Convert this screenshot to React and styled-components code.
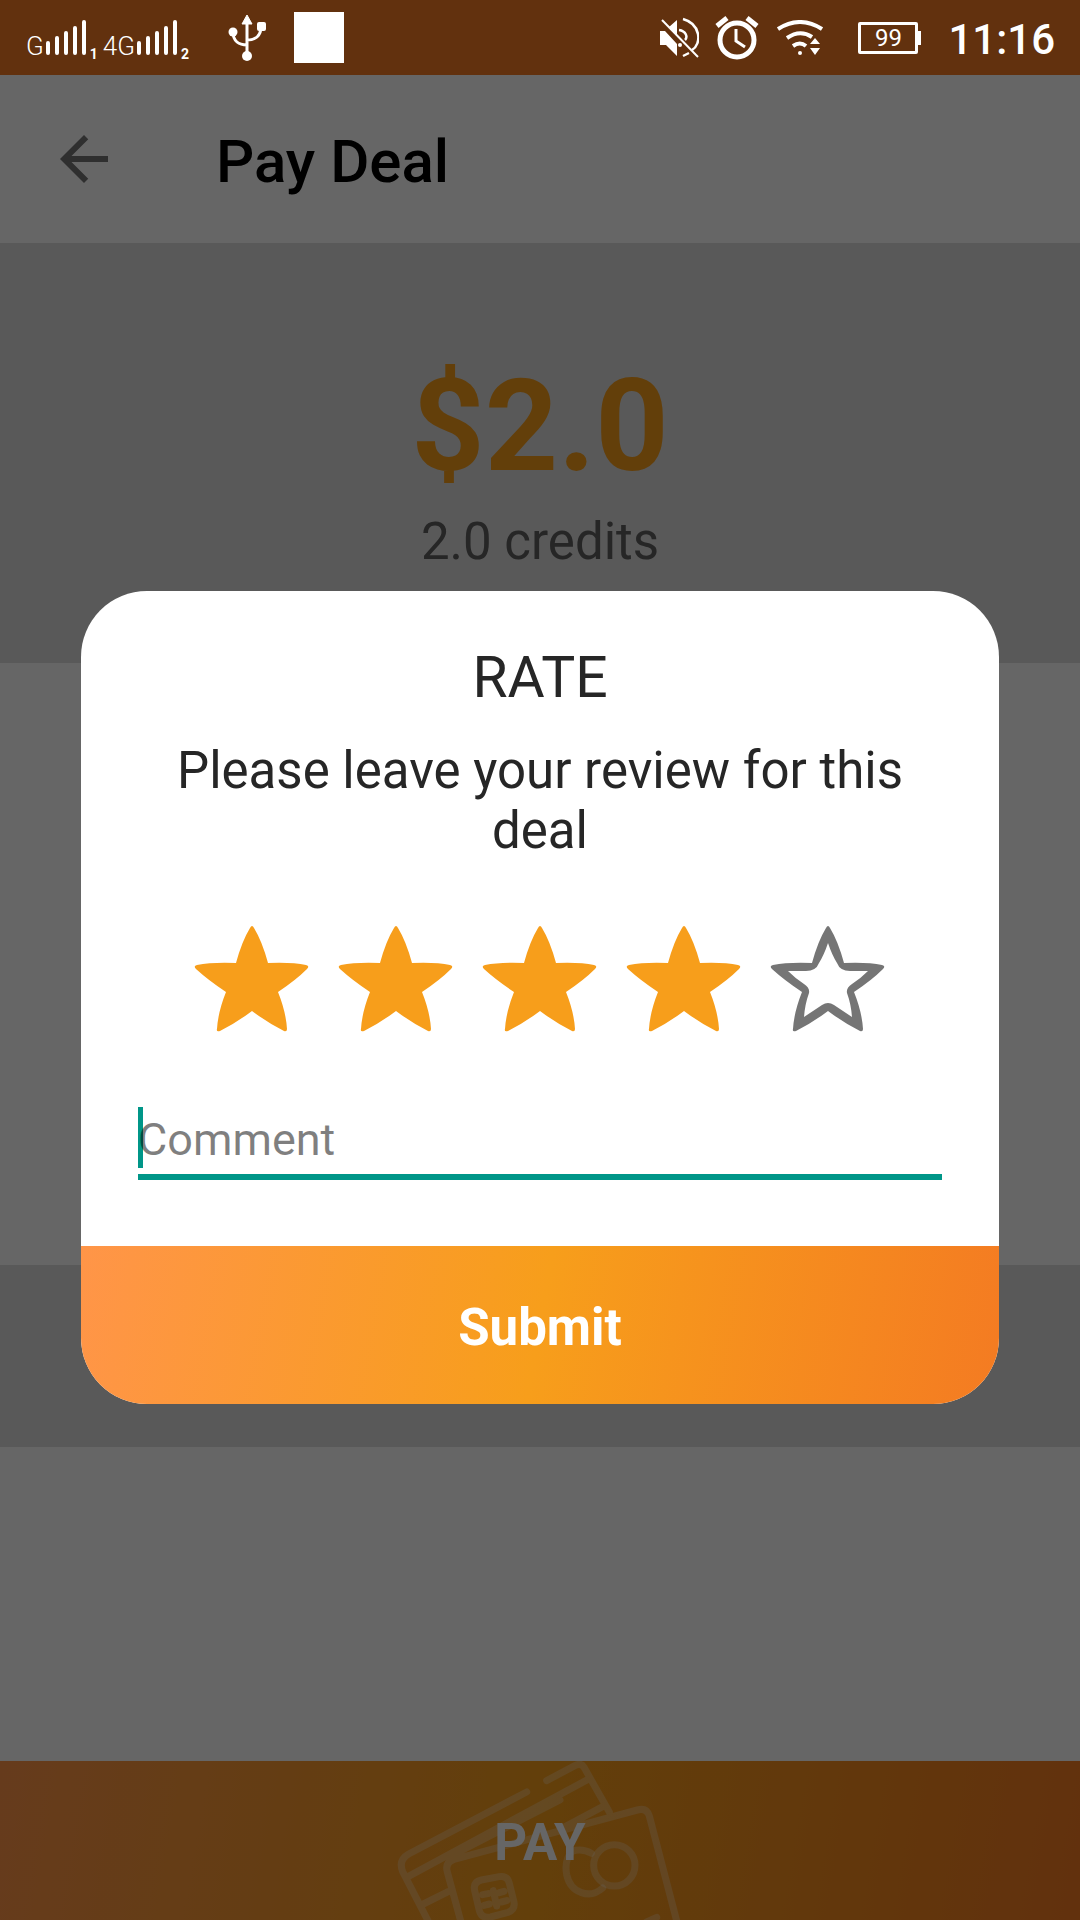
import React, { useState } from 'react';
import styled, { createGlobalStyle } from 'styled-components';

const STAR = "M58 6Q60 2 62 6Q70 19 76 41Q100 40 114 43Q118 44 115 47Q104 58 86 70Q94 90 95 107Q95 110 92 109Q76 101 60 89Q44 101 28 109Q24 110 25 107Q26 90 34 70Q16 58 4 47Q1 44 5 43Q20 40 44 41Q50 19 58 6Z";
const STAR_HOLE = "M60 21Q56 33 51 41Q48 49 38 49L20 49Q28 57 36 62Q42 66 41 71Q37 82 36 95Q45 89 54 83Q60 79 66 83Q75 89 84 95Q83 82 79 71Q78 66 84 62Q92 57 100 49L82 49Q72 49 69 41Q64 33 60 21Z";

const ratings = [1, 2, 3, 4, 5];

function SignalBars() {
    return (
        <svg width="42" height="36" viewBox="0 0 42 36" stroke="#fff" strokeWidth="4" strokeLinecap="round" aria-hidden="true">
            <path d="M2 23V33M11 18V33M20 13V33M29 8V33M38 2V33" />
        </svg>
    );
}

function UsbIcon() {
    return (
        <svg width="38" height="48" viewBox="0 0 38 48" fill="none" stroke="#fff" strokeWidth="3" aria-hidden="true">
            <path d="M19 8V41M5 18C5 27 11 31 19 31M33 13C33 22 27 26 19 26" />
            <path d="M19 1L24 10H14Z" fill="#fff" strokeWidth="1" strokeLinejoin="round" />
            <circle cx="5" cy="18" r="4.5" fill="#fff" stroke="none" />
            <rect x="29" y="8" width="9" height="9" rx="2" fill="#fff" stroke="none" />
            <circle cx="19" cy="42" r="5" fill="#fff" stroke="none" />
        </svg>
    );
}

function MuteIcon() {
    return (
        <svg width="40" height="42" viewBox="0 0 40 42" fill="none" stroke="#fff" strokeWidth="2" aria-hidden="true">
            <path d="M1 14H6L18 27V39L7 28H1ZM10 10L18 3V18Z" fill="#fff" stroke="none" />
            <path d="M24 2C42 7 43 27 33 33M30 36L24 39M20 13C27 14 29 20 26 23" strokeWidth="2.5" />
            <path d="M3 3L39 40" />
            <circle cx="21" cy="28" r="2" fill="#fff" stroke="none" />
        </svg>
    );
}

function AlarmIcon() {
    return (
        <svg width="46" height="44" viewBox="0 0 46 44" fill="none" stroke="#fff" aria-hidden="true">
            <circle cx="22" cy="24" r="17" strokeWidth="5" />
            <path d="M21 13V25L30 31" strokeWidth="3" />
            <path d="M2 10L12 2M32 2L42 10" strokeWidth="5" />
        </svg>
    );
}

function WifiIcon() {
    return (
        <svg width="46" height="36" viewBox="0 0 46 36" fill="none" stroke="#fff" strokeWidth="4" aria-hidden="true">
            <path d="M1 9Q23 -5 45 9M10 18Q23 9 35 17M16 26Q23 21 29 26" />
            <circle cx="23" cy="33" r="2" fill="#fff" stroke="none" />
            <path d="M33 24L38 18L43 24ZM33 28H43L38 35Z" fill="#fff" stroke="none" />
        </svg>
    );
}

function CardsArt() {
    return (
        <CardsSvg viewBox="0 63 960 477" fill="none" stroke="#fff" strokeOpacity="0.25" strokeWidth="21" strokeLinecap="round" strokeLinejoin="round" aria-hidden="true">
            <path d="M440 156L86 342Q54 360 68 395L148 550M500 122L586 76Q604 68 612 82L688 216M80 412L628 116M130 492L206 454M204 352L540 180M540 268L668 200M244 550L202 396Q194 368 222 358L772 210Q800 202 808 228L892 550M576 334Q552 360 560 404C572 460 630 478 668 444M576 334Q606 324 634 340M284 452Q278 426 304 420L358 410Q382 406 388 430L402 486Q406 510 384 517L332 531Q304 536 298 512ZM308 464L324 461M312 496L328 492M372 454L358 458M380 482L364 486M340 452L350 498" />
            <circle cx="703" cy="376" r="62" />
            <path d="M800 546L830 532" />
        </CardsSvg>
    );
}

function RateDialog() {
    const [rating, setRating] = useState(4);
    const [comment, setComment] = useState('');

    return (
        <Dialog role="dialog" aria-labelledby="rate-title" onSubmit={(e) => e.preventDefault()}>
            <DialogBody>
                <DialogTitle id="rate-title">RATE</DialogTitle>
                <DialogText>Please leave your review for this deal</DialogText>
                <Stars>
                    {ratings.map((value) => (
                        <StarLabel key={value}>
                            <StarInput type="radio" name="rating" aria-label={value + ' stars'} checked={rating === value} onChange={() => setRating(value)} />
                            <svg width="120" height="112" viewBox="0 0 120 112" aria-hidden="true">
                                {value <= rating
                                    ? <path d={STAR} fill="#f79e1b" />
                                    : <path d={STAR + STAR_HOLE} fill="#757575" fillRule="evenodd" />}
                            </svg>
                        </StarLabel>
                    ))}
                </Stars>
                <CommentField>
                    {comment === '' && <Caret />}
                    <CommentInput aria-label="Comment" placeholder="Comment" value={comment} onChange={(e) => setComment(e.target.value)} />
                </CommentField>
            </DialogBody>
            <SubmitButton type="submit">Submit</SubmitButton>
        </Dialog>
    );
}

function App() {
    return (
        <Page>
            <GlobalStyle />
            <StatusBar>
                <StatusGroup gap="36px">
                    <Signals>
                        <Network>G</Network><SignalBars /><SimNumber>1</SimNumber>
                        <Network>4G</Network><SignalBars /><SimNumber>2</SimNumber>
                    </Signals>
                    <UsbIcon />
                    <Square />
                </StatusGroup>
                <StatusGroup gap="16px">
                    <MuteIcon />
                    <AlarmIcon />
                    <WifiIcon />
                    <Battery>99</Battery>
                    <Clock>11:16</Clock>
                </StatusGroup>
            </StatusBar>
            <AppBar>
                <BackButton type="button" aria-label="Back">
                    <svg width="72" height="72" viewBox="0 0 24 24" fill="#757575">
                        <path d="M20 11H7.83l5.59-5.59L12 4l-8 8 8 8 1.41-1.41L7.83 13H20v-2z" />
                    </svg>
                </BackButton>
                <Title>Pay Deal</Title>
            </AppBar>
            <Amount>
                <Price>$2.0</Price>
                <Credits>2.0 credits</Credits>
            </Amount>
            <Details />
            <Band />
            <Filler />
            <PayButton type="button">
                <CardsArt />
                <PayText>PAY</PayText>
            </PayButton>
            <Scrim>
                <RateDialog />
            </Scrim>
        </Page>
    );
}

export default App;

const GlobalStyle = createGlobalStyle`
    * {
        box-sizing: border-box;
    }
    body {
        margin: 0;
        font-family: Roboto, "Liberation Sans", sans-serif;
    }
    button, input {
        font-family: inherit;
        border: none;
        padding: 0;
    }
    svg {
        display: block;
        flex-shrink: 0;
    }
`

const Page = styled.div`
    position: relative;
    display: flex;
    flex-direction: column;
    min-height: 100vh;
    background: #fff;
`

const StatusBar = styled.header`
    display: flex;
    align-items: center;
    justify-content: space-between;
    height: 75px;
    padding: 0 25px 0 26px;
    background: #62310e;
    color: #fff;
`

const StatusGroup = styled.div`
    display: flex;
    align-items: center;
    gap: ${props => props.gap};
`

const Signals = styled.div`
    display: flex;
    align-items: flex-end;
    gap: 2px;
`

const Network = styled.span`
    font-size: 26px;
    font-weight: 300;
    line-height: 26px;
    margin-bottom: -3px;
`

const SimNumber = styled.span`
    font-size: 14px;
    font-weight: 700;
    line-height: 12px;
    margin: 0 3px -4px 0;
`

const Square = styled.div`
    width: 50px;
    height: 51px;
    margin-left: -8px;
    background: #fff;
`

const Battery = styled.div`
    position: relative;
    width: 60px;
    height: 32px;
    margin: 0 14px 0 19px;
    border: 3px solid #fff;
    border-radius: 2px;
    font-size: 24px;
    line-height: 26px;
    text-align: center;
    &::after {
        content: "";
        position: absolute;
        top: 6px;
        right: -6px;
        width: 4px;
        height: 14px;
        background: #fff;
    }
`

const Clock = styled.time`
    padding-top: 4px;
    font-size: 42px;
    font-weight: 500;
`

const AppBar = styled.div`
    display: flex;
    align-items: center;
    gap: 96px;
    height: 168px;
    padding: 0 48px;
`

const BackButton = styled.button`
    background: none;
`

const Title = styled.h1`
    margin: 0;
    padding-top: 4px;
    font-size: 60px;
    font-weight: 500;
    color: #000;
`

const Amount = styled.section`
    display: flex;
    flex-direction: column;
    align-items: center;
    gap: 11px;
    padding: 108px 0 91px;
    background: #dedede;
`

const Price = styled.div`
    font-size: 128px;
    font-weight: 700;
    line-height: 150px;
    color: #f79e1b;
`

const Credits = styled.div`
    font-size: 51px;
    line-height: 60px;
    color: #5f5f5f;
`

const Details = styled.section`
    height: 602px;
`

const Band = styled.div`
    height: 182px;
    background: #dedede;
`

const Filler = styled.div`
    flex: 1;
`

const GradientButton = styled.button`
    width: 100%;
    padding-top: 4px;
    background: linear-gradient(100deg, #ff9548, #f79e1b 50%, #f47b22);
    color: #fff;
    font-size: 51px;
    font-weight: 700;
`

const PayButton = styled(GradientButton)`
    position: relative;
    height: 159px;
    overflow: hidden;
`

const PayText = styled.span`
    position: relative;
`

const CardsSvg = styled.svg`
    position: absolute;
    top: 0;
    left: 50%;
    width: 320px;
    height: 159px;
    transform: translateX(-50%);
`

const Scrim = styled.div`
    position: absolute;
    inset: 75px 0 0;
    display: flex;
    align-items: center;
    justify-content: center;
    background: rgba(0, 0, 0, 0.6);
`

const Dialog = styled.form`
    width: 85%;
    border-radius: 66px;
    overflow: hidden;
    background: #fff;
    color: #262626;
`

const DialogBody = styled.div`
    padding: 53px 57px 66px;
    text-align: center;
`

const DialogTitle = styled.h2`
    margin: 0 0 30px;
    font-size: 57px;
    font-weight: 400;
    line-height: 67px;
`

const DialogText = styled.p`
    margin: 0 0 61px;
    font-size: 51px;
    line-height: 60px;
`

const Stars = styled.div`
    display: flex;
    justify-content: center;
    gap: 24px;
    margin-bottom: 73px;
`

const StarLabel = styled.label`
    position: relative;
    cursor: pointer;
`

const StarInput = styled.input`
    position: absolute;
    inset: 0;
    margin: 0;
    opacity: 0;
`

const CommentField = styled.div`
    position: relative;
    border-bottom: 6px solid #009688;
`

const Caret = styled.span`
    position: absolute;
    top: 0;
    left: 0;
    width: 5px;
    height: 61px;
    background: #009688;
`

const CommentInput = styled.input`
    position: relative;
    display: block;
    width: 100%;
    height: 67px;
    padding-bottom: 2px;
    background: none;
    outline: none;
    font-size: 45px;
    color: #262626;
    &::placeholder {
        color: rgba(0, 0, 0, 0.5);
        opacity: 1;
    }
`

const SubmitButton = styled(GradientButton)`
    display: block;
    height: 158px;
`
